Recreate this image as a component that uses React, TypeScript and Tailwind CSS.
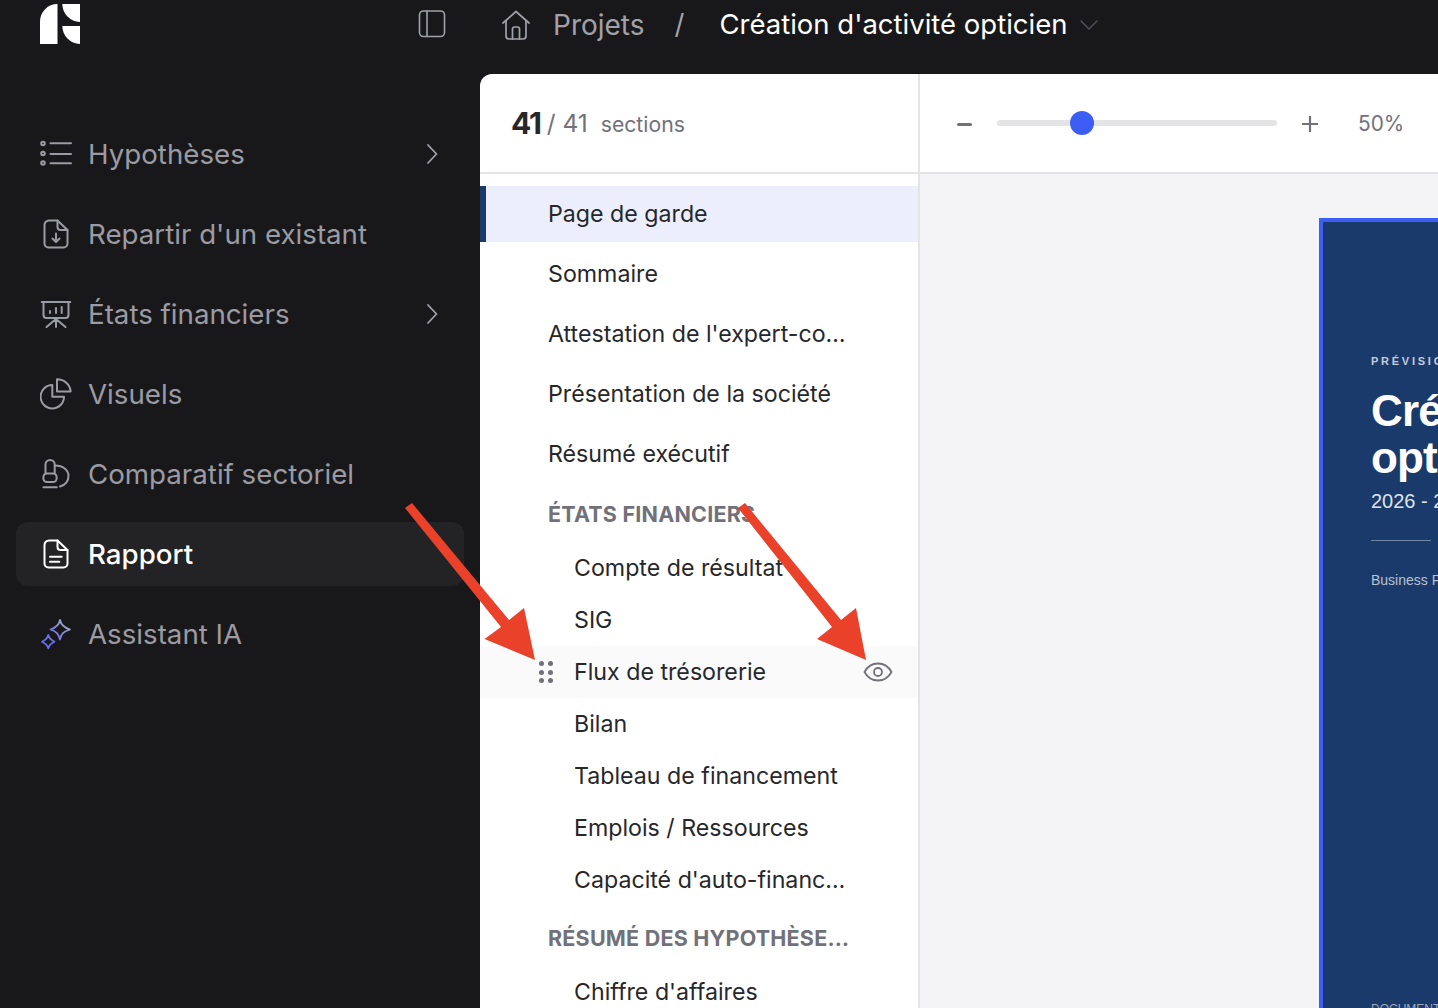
import type { ReactNode } from "react";

const stroke = {
  fill: "none",
  stroke: "currentColor",
  strokeWidth: 2,
  strokeLinecap: "round" as const,
  strokeLinejoin: "round" as const,
};

function Icon({ children }: { children: ReactNode }) {
  return (
    <svg width="32" height="32" viewBox="0 0 32 32" className="shrink-0" {...stroke}>
      {children}
    </svg>
  );
}

const FileShape = "M9 2.5h8.5L27.5 12v13.5a4 4 0 0 1-4 4H8.5a4 4 0 0 1-4-4V7a4.5 4.5 0 0 1 4.5-4.5Z";

const icons = {
  list: (
    <Icon>
      <circle cx="3" cy="5.5" r="1.8" />
      <circle cx="3" cy="15.5" r="1.8" />
      <circle cx="3" cy="25" r="1.8" />
      <path d="M10.5 5.3h20.5M10.5 16h20.5M10.5 25.3h20.5" />
    </Icon>
  ),
  fileDown: (
    <Icon>
      <path d={FileShape} />
      <path d="M17.5 2.5V9a3 3 0 0 0 3 3h7" />
      <path d="M16 15.5v8M12.5 20.5l3.5 3.5 3.5-3.5" />
    </Icon>
  ),
  board: (
    <Icon>
      <path d="M1.7 4h28.6M3.5 4v13a3 3 0 0 0 3 3h19a3 3 0 0 0 3-3V4" />
      <path d="M10 15v-2M16 15v-5M21.7 15V9" />
      <path d="M16 21v8M16 21 6.5 29M16 21l9.5 8" />
    </Icon>
  ),
  pie: (
    <Icon>
      <path d="M12.3 7A11.7 11.7 0 1 0 24 18.7H12.3Z" />
      <path d="M17 1.2c7 0 13.3 5.3 13.6 12.3H17Z" />
    </Icon>
  ),
  scope: (
    <Icon>
      <path d="M5.5 15V6.5a4.6 4.6 0 0 1 9.2 0V15" />
      <rect x="3.4" y="15.5" width="13.2" height="8.5" rx="3.5" />
      <path d="M3.4 29.3h13.4" />
      <path d="M15 7.5c8 0 13.5 4.5 13.5 10.5 0 5-3.5 9-8.5 10.5" />
    </Icon>
  ),
  report: (
    <Icon>
      <path d={FileShape} />
      <path d="M17.5 2.5V9a3 3 0 0 0 3 3h7" />
      <path d="M10 18.7h11.7M10 23.7h9.3" />
    </Icon>
  ),
  spark: (
    <svg width="32" height="32" viewBox="0 0 32 32" className="shrink-0" {...stroke} strokeWidth={1.8}>
      <defs>
        <linearGradient id="sparkGrad" x1="0" y1="1" x2="1" y2="0">
          <stop offset="0" stopColor="#6366f1" />
          <stop offset="1" stopColor="#b4b4bc" />
        </linearGradient>
      </defs>
      <path
        d="M20 2c1 5 3.500 7.500 10 9.500-6.500 2-9 4.500-10 10-1.500-5.500-3.500-8-9.500-10 6-2 8.500-4.500 9.500-9.500Z"
        stroke="url(#sparkGrad)"
      />
      <path d="M8.300 17c.7 3 2.200 4.800 6.200 6.700-4 1.800-5.500 3.600-6.200 6.600-.8-3-2.300-4.800-6.300-6.600 4-1.900 5.500-3.700 6.300-6.700Z" stroke="#6a6ff0" />
    </svg>
  ),
};

function Chevron() {
  return (
    <svg width="14" height="24" viewBox="0 0 14 24" {...stroke} strokeWidth={1.8} className="shrink-0 text-[#a1a1aa]">
      <path d="M3 3l8.500 9L3 21" />
    </svg>
  );
}

const navItems = [
  { label: "Hypothèses", icon: icons.list, chevron: true },
  { label: "Repartir d'un existant", icon: icons.fileDown },
  { label: "États financiers", icon: icons.board, chevron: true },
  { label: "Visuels", icon: icons.pie },
  { label: "Comparatif sectoriel", icon: icons.scope },
  { label: "Rapport", icon: icons.report, active: true },
  { label: "Assistant IA", icon: icons.spark },
];

type Section =
  | { kind: "top"; label: string; selected?: boolean }
  | { kind: "head"; label: string }
  | { kind: "sub"; label: string; hover?: boolean };

const sections: Section[] = [
  { kind: "top", label: "Page de garde", selected: true },
  { kind: "top", label: "Sommaire" },
  { kind: "top", label: "Attestation de l'expert-comptable" },
  { kind: "top", label: "Présentation de la société" },
  { kind: "top", label: "Résumé exécutif" },
  { kind: "head", label: "États financiers" },
  { kind: "sub", label: "Compte de résultat" },
  { kind: "sub", label: "SIG" },
  { kind: "sub", label: "Flux de trésorerie", hover: true },
  { kind: "sub", label: "Bilan" },
  { kind: "sub", label: "Tableau de financement" },
  { kind: "sub", label: "Emplois / Ressources" },
  { kind: "sub", label: "Capacité d'auto-financement" },
  { kind: "head", label: "Résumé des hypothèses clés" },
  { kind: "sub", label: "Chiffre d'affaires" },
];

function Logo() {
  return (
    <svg width="40" height="40" viewBox="0 0 40 40" fill="#fff">
      <path d="M0 40V17.500A17.500 17.500 0 0 1 17.500 0V40Z" />
      <path d="M22.300 0H40V18A18 18 0 0 1 22.300 0Z" />
      <path d="M22.300 22H40V40A18 18 0 0 1 22.300 22Z" />
    </svg>
  );
}

function SectionRow({ item }: { item: Section }) {
  if (item.kind === "head") {
    return (
      <div className="flex h-14 items-center pl-[68px] pr-[66px] text-[21.500px] font-bold uppercase tracking-[0.01em] text-[#71717a]">
        <span className="truncate">{item.label}</span>
      </div>
    );
  }
  if (item.kind === "top") {
    return (
      <div
        className={`flex h-14 items-center pr-[72px] text-[23.200px] text-[#27272a] ${
          item.selected ? "border-l-[6px] border-[#1a3a6b] bg-[#eceefc] pl-[62px]" : "pl-[68px]"
        }`}
      >
        <span className="truncate">{item.label}</span>
      </div>
    );
  }
  return (
    <div className={`flex h-[52px] items-center text-[23.200px] text-[#27272a] ${item.hover ? "bg-[#fafafa]" : ""}`}>
      <div className="flex w-[94px] shrink-0 justify-end pr-[21px]">
        {item.hover && (
          <div className="grid grid-cols-2 gap-x-[4px] gap-y-[3.500px]">
            {[0, 1, 2, 3, 4, 5].map((d) => (
              <span key={d} className="h-[5px] w-[5px] rounded-full bg-[#71717a]" />
            ))}
          </div>
        )}
      </div>
      <span className="min-w-0 flex-1 truncate pr-[72px]">{item.label}</span>
      {item.hover && (
        <svg width="30" height="30" viewBox="0 0 30 30" {...stroke} strokeWidth={1.8} className="-ml-[55px] mr-[25px] shrink-0 text-[#71717a]">
          <path d="M1.500 15C4.500 9.500 9 6.500 15 6.500S25.500 9.500 28.500 15C25.500 20.500 21 23.500 15 23.500S4.500 20.500 1.500 15Z" />
          <circle cx="15" cy="15" r="4" />
        </svg>
      )}
    </div>
  );
}

export default function App() {
  return (
    <div className="relative flex h-[1008px] w-[1438px] flex-col overflow-hidden bg-[#18181b] font-['Inter',sans-serif]">
      <header className="flex h-[74px] shrink-0 text-[27.500px]">
        <div className="flex w-[480px] shrink-0 pl-10 pr-[34px] pt-1">
          <Logo />
          <svg width="28" height="28" viewBox="0 0 28 28" {...stroke} strokeWidth={1.6} className="ml-auto mt-[6px] text-[#a1a1aa]">
            <rect x="1.500" y="1" width="25" height="25.500" rx="4" />
            <path d="M9 1v25.500" />
          </svg>
        </div>
        <div className="flex h-[50px] items-center">
          <svg width="32" height="32" viewBox="0 0 32 32" {...stroke} strokeWidth={1.7} className="ml-[20px] text-[#a1a1aa]">
            <path d="M3 14 16 2.500 29 14" />
            <path d="M6 11.500V27a3 3 0 0 0 3 3h14a3 3 0 0 0 3-3V11.500" />
            <path d="M12.500 30V20a2 2 0 0 1 2-2h3a2 2 0 0 1 2 2v10" />
          </svg>
          <span className="ml-[21px] text-[28px] text-[#a1a1aa]">Projets</span>
          <span className="ml-[30px] text-[#a1a1aa]">/</span>
          <span className="ml-[35px] whitespace-nowrap text-white">Création d'activité opticien</span>
          <svg width="20" height="12" viewBox="0 0 20 12" {...stroke} strokeWidth={1.4} className="ml-[12px] text-[#52525b]">
            <path d="M2 2l8 8 8-8" />
          </svg>
        </div>
      </header>

      <div className="flex min-h-0 flex-1">
        <nav className="flex w-[480px] shrink-0 flex-col gap-4 px-4 pt-[48px] text-[27.700px]">
          {navItems.map((item) => (
            <div
              key={item.label}
              className={`flex h-16 items-center gap-4 rounded-xl pl-6 pr-[25px] ${
                item.active ? "bg-[#232326] font-medium text-white" : "text-[#9b9ba3]"
              }`}
            >
              {item.icon}
              <span className="flex-1 pt-px">{item.label}</span>
              {item.chevron && <Chevron />}
            </div>
          ))}
        </nav>

        <main className="flex min-w-0 flex-1 overflow-hidden rounded-tl-xl bg-white">
          <aside className="flex w-[440px] shrink-0 flex-col border-r-2 border-[#e4e4e7]">
            <div className="flex h-[100px] shrink-0 items-center border-b-2 border-[#e4e4e7] pl-[31px] text-[#71717a]">
              <span className="text-[30px] font-bold tracking-[-0.04em] text-[#27272a]">41</span>
              <span className="ml-[6px] text-[24.500px]">/ 41</span>
              <span className="ml-[13px] pt-[3px] text-[21.200px]">sections</span>
            </div>
            <div className="flex flex-col pt-3">
              {sections.map((item, i) => (
                <div key={item.label} className={item.kind === "top" || (item.kind === "head" && i > 0) ? "mb-0 mt-[4px] first:mt-0" : ""}>
                  <SectionRow item={item} />
                </div>
              ))}
            </div>
          </aside>

          <section className="flex min-w-0 flex-1 flex-col overflow-hidden bg-[#f4f4f6]">
            <div className="flex h-[100px] shrink-0 items-center border-b-2 border-[#e4e4e7] bg-white pl-[37px] pt-[2px] text-[#71717a]">
              <span className="h-[3px] w-[15px] rounded-full bg-[#71717a]" />
              <div className="relative ml-[25px] h-[6px] w-[280px] -translate-y-[1px] rounded-full bg-[#e4e4e7]">
                <span className="absolute left-[73px] top-[-9px] h-6 w-6 rounded-full bg-[#3d5ef5]" />
              </div>
              <svg width="18" height="18" viewBox="0 0 18 18" {...stroke} strokeWidth={2.200} strokeLinecap="butt" className="ml-[24px]">
                <path d="M1 9h16M9 1v16" />
              </svg>
              <span className="ml-[39px] text-[20.800px]">50%</span>
            </div>
            <div className="flex-1 pl-[399px] pt-[44px]">
              <div className="flex h-[900px] w-[640px] flex-col border-4 border-[#3d5ef5] bg-[#1a3a6b] pl-12 pt-[132px] font-['Liberation_Sans',sans-serif] whitespace-nowrap text-white">
                <p className="text-[11px] font-bold leading-[14px] tracking-[0.25em] text-[#c4ccd8]">PRÉVISIONNEL FINANCIER</p>
                <h2 className="mt-[19px] text-[44px] font-bold leading-[47px] tracking-[-0.02em]">
                  Création d'activité
                  <br />
                  opticien
                </h2>
                <p className="mt-[8px] text-[20px] leading-6 text-[#dfe3ea]">2026 - 2029</p>
                <div className="mt-[27px] h-px w-[60px] bg-[#6f86a8]" />
                <p className="mt-[31px] text-[14px] leading-4 text-[#b9c2d0]">Business Plan</p>
                <p className="mt-[413px] text-[12px] leading-4 text-[#9fabbf]">DOCUMENT CONFIDENTIEL</p>
              </div>
            </div>
          </section>
        </main>
      </div>

      <svg width="1438" height="1008" viewBox="0 0 1438 1008" className="pointer-events-none absolute left-0 top-0" fill="#e9412a">
        <path d="M405 508 412 503 509 620 524 608 535 660 484.500 639 501 627Z" />
        <path d="M738 508 745 503 841 620 856 608 866 660 817 639 832 627Z" />
      </svg>
    </div>
  );
}
